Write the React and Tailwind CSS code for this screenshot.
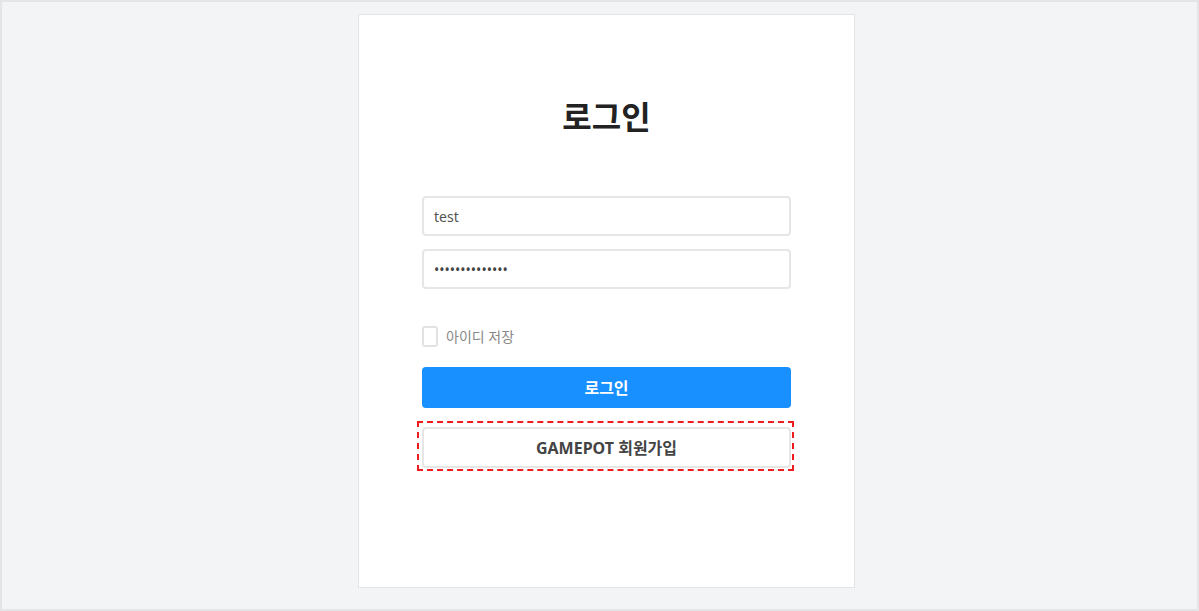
function App() {
  return (
    <div
      className="h-[611px] w-[1199px] border-2 border-[#e4e5e7] bg-[#f3f4f6] pl-[356px] pt-[12px]"
      style={{ fontFamily: '"Noto Sans", "Noto Sans CJK KR", sans-serif' }}
    >
      <div className="flex h-[574px] w-[497px] flex-col border border-[#e3e4e6] bg-white px-[63px]">
        <h1 className="mt-[78px] text-center text-[32px] font-bold leading-[48px] text-[#222]">로그인</h1>

        <div className="mt-[55px] flex flex-col gap-[13px]">
          <input
            type="text"
            defaultValue="test"
            className="h-10 w-full rounded border-2 border-[#e6e6e6] px-[10px] text-[14px] text-[#555] outline-none"
          />
          <input
            type="password"
            defaultValue="12345678901234"
            className="h-10 w-full rounded border-2 border-[#e6e6e6] px-[10px] text-[14px] text-[#444] outline-none"
          />
        </div>

        <label className="mt-[37px] flex h-[21px] items-center gap-2">
          <span className="h-[21px] w-[16px] rounded-[3px] border-2 border-[#e2e2e2] bg-white" />
          <span className="text-[14px] leading-[21px] text-[#888]">아이디 저장</span>
        </label>

        <button
          type="button"
          className="mt-[20px] h-[41px] w-full rounded bg-[#1890ff] text-[16px] font-bold text-white"
        >
          로그인
        </button>

        <div className="-ml-[5px] -mr-[3px] mt-[13px] border-2 border-dashed border-[#ee1c1c] pb-[1px] pl-[3px] pr-[1px] pt-[4px]">
          <button
            type="button"
            className="h-[41px] w-full rounded border-2 border-[#e6e6e6] bg-white text-[16px] font-bold text-[#444]"
          >
            GAMEPOT 회원가입
          </button>
        </div>
      </div>
    </div>
  )
}

export default App
